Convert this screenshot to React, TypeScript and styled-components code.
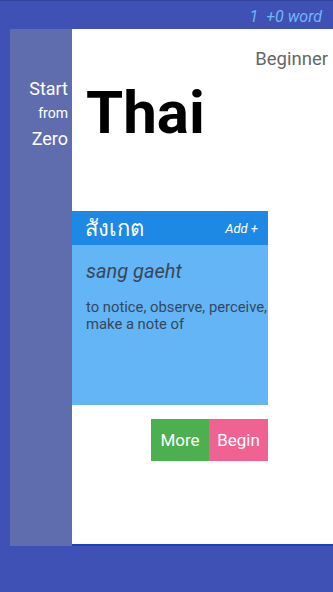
import * as React from 'react'
import styled, { createGlobalStyle } from 'styled-components'

const GlobalStyle = createGlobalStyle`
    html, body {
        margin: 0;
        padding: 0;
        background-color: #3f51b5;
    }
    body {
        font-family: Roboto, "Noto Sans", sans-serif;
    }
`

const Screen = styled.div`
    display: flex;
    flex-direction: column;
    width: 333px;
    height: 592px;
    background-color: #3f51b5;
    overflow: hidden;
`
const TopBar = styled.div`
    height: 29px;
    display: flex;
    align-items: flex-end;
    justify-content: flex-end;
    padding-right: 11px;
    box-sizing: border-box;
    border-top: 1px solid #33449c;
`
const Counter = styled.div`
    font-style: italic;
    font-size: 16px;
    line-height: 20px;
    color: #72b6f4;
    white-space: pre;
    padding-bottom: 2px;
`
const Body = styled.div`
    display: flex;
    height: 517px;
    padding-left: 10px;
`
const Sidebar = styled.div`
    width: 62px;
    background-color: #5f6daf;
    padding: 47px 4px 0 0;
    box-sizing: border-box;
    text-align: right;
    color: #ffffff;
`
const SideWord = styled.div<{ $small?: boolean }>`
    font-size: ${p => (p.$small ? '14px' : '18px')};
    line-height: 25px;
`
const Main = styled.div`
    flex: 1;
    background-color: #ffffff;
    border-bottom: 2px solid #1e3fbf;
    display: flex;
    flex-direction: column;
`
const Level = styled.div`
    align-self: flex-end;
    padding: 19px 5px 0 0;
    font-size: 18.5px;
    line-height: 22px;
    color: #666666;
`
const Title = styled.div`
    padding: 6px 0 0 14px;
    font-size: 60px;
    line-height: 73px;
    font-weight: bold;
    color: #000000;
`
const Card = styled.div`
    margin-top: 62px;
    width: 196px;
    display: flex;
    flex-direction: column;
`
const CardHead = styled.div`
    height: 34px;
    background-color: #1e88e5;
    display: flex;
    align-items: center;
    justify-content: space-between;
    padding: 0 10px 0 13px;
    color: #ffffff;
`
const ThaiWord = styled.span`
    font-family: "Noto Sans", "DejaVu Sans", sans-serif;
    font-size: 22px;
`
const AddLink = styled.span`
    font-style: italic;
    font-size: 13px;
`
const CardBody = styled.div`
    height: 160px;
    background-color: #64b5f6;
    padding: 14px 0 0 14px;
    box-sizing: border-box;
    color: #37475a;
`
const Roman = styled.div`
    font-style: italic;
    font-size: 20px;
    line-height: 24px;
`
const Meaning = styled.div`
    margin-top: 16px;
    font-size: 14.8px;
    line-height: 17px;
`
const Buttons = styled.div`
    display: flex;
    justify-content: flex-end;
    width: 196px;
    margin-top: 14px;
`
const Btn = styled.div<{ $color: string; $w: number }>`
    width: ${p => p.$w}px;
    height: 42px;
    display: flex;
    align-items: center;
    justify-content: center;
    background-color: ${p => p.$color};
    color: #ffffff;
    font-size: 17px;
`

export default function App() {
    return (
        <>
            <GlobalStyle />
            <Screen>
                <TopBar>
                    <Counter>1  +0 word</Counter>
                </TopBar>
                <Body>
                    <Sidebar>
                        <SideWord>Start</SideWord>
                        <SideWord $small>from</SideWord>
                        <SideWord>Zero</SideWord>
                    </Sidebar>
                    <Main>
                        <Level>Beginner</Level>
                        <Title>Thai</Title>
                        <Card>
                            <CardHead>
                                <ThaiWord>สังเกต</ThaiWord>
                                <AddLink>Add +</AddLink>
                            </CardHead>
                            <CardBody>
                                <Roman>sang gaeht</Roman>
                                <Meaning>to notice, observe, perceive, make a note of</Meaning>
                            </CardBody>
                        </Card>
                        <Buttons>
                            <Btn $color="#4caf50" $w={58}>More</Btn>
                            <Btn $color="#f06292" $w={59}>Begin</Btn>
                        </Buttons>
                    </Main>
                </Body>
            </Screen>
        </>
    )
}
